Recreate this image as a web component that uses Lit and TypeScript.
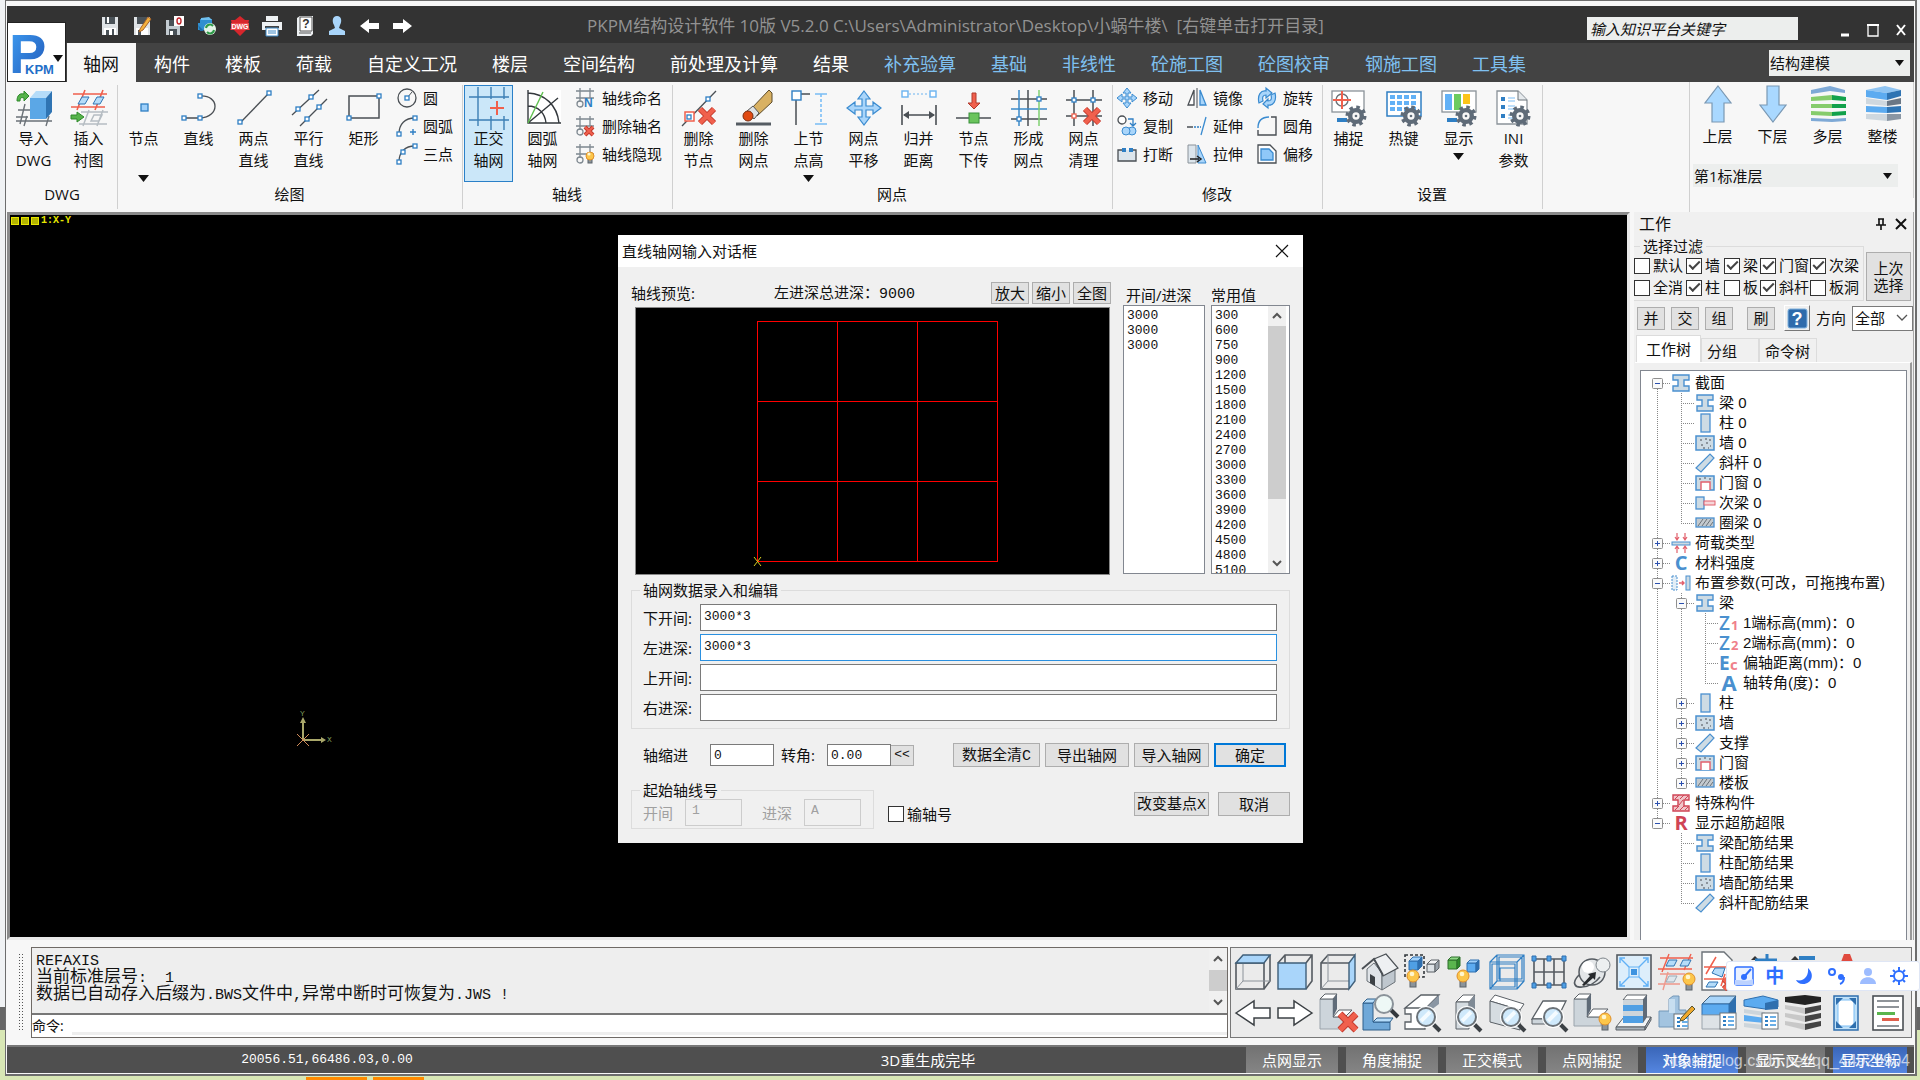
import { LitElement, html, svg, css, nothing } from "lit";
import type { SVGTemplateResult } from "lit";
import { customElement, state } from "lit/decorators.js";
import { classMap } from "lit/directives/class-map.js";

type Art = SVGTemplateResult;

const BLUE = "#2f7fc4";
const SKY = "#a9d5fa";
const INK = "#4a4f54";
const RED = "#f0604d";

/* ---------- reusable drawing parts ---------- */

const node = (x: number, y: number, c = BLUE) =>
  svg`<rect x=${x - 2} y=${y - 2} width="4" height="4" fill="#fff" stroke=${c} stroke-width="1.3"/>`;

const cross = (x: number, y: number, s: number, w = 5) =>
  svg`<path d=${`M${x - s} ${y - s}L${x + s} ${y + s}M${x + s} ${y - s}L${x - s} ${y + s}`} stroke="#c33a2e" stroke-width=${w + 1} fill="none"/>
      <path d=${`M${x - s} ${y - s}L${x + s} ${y + s}M${x + s} ${y - s}L${x - s} ${y + s}`} stroke=${RED} stroke-width=${w - 1} fill="none"/>`;

const bulb = (x: number, y: number, r = 6) =>
  svg`<rect x=${x - r / 2} y=${y + r - 2} width=${r} height=${r + 1} fill="#8b949b" stroke="#5b6268" stroke-width="1"/>
      <circle cx=${x} cy=${y} r=${r} fill="#fcc64a" stroke="#e0902a"/>
      <circle cx=${x - 1} cy=${y - 2} r=${r / 2.6} fill="#fff6cf"/>`;

const lens = (x: number, y: number, r = 9) =>
  svg`<path d=${`M${x + r - 3} ${y + r - 3}L${x + r + 5} ${y + r + 5}`} stroke="#3c4145" stroke-width="4"/>
      <circle cx=${x} cy=${y} r=${r} fill="#cfe9fb" stroke="#fff" stroke-width="4"/>
      <circle cx=${x} cy=${y} r=${r} fill="#cfe9fb" stroke="#6b7278" stroke-width="2"/>
      <path d=${`M${x - 5} ${y + 4}L${x + 4} ${y - 5}`} stroke="#f4fbff" stroke-width="4"/>`;

const gear = (x: number, y: number, r: number, c = "#5f6b78", hole = "#f8f8f8") =>
  svg`<circle cx=${x} cy=${y} r=${r} fill="none" stroke=${c} stroke-width="5" stroke-dasharray="3.2 3.08"/>
      <circle cx=${x} cy=${y} r=${r - 0} fill=${c}/>
      <circle cx=${x} cy=${y} r=${r / 2.2} fill=${hole}/>
      <circle cx=${x} cy=${y} r=${r / 6} fill=${c}/>`;

const cube = (x: number, y: number, s: number, d: number, front: string, top: string, side: string, st = "#5a6066") =>
  svg`<g stroke=${st} stroke-width="1" stroke-linejoin="round">
      <path d=${`M${x} ${y + d}h${s}v${s}h${-s}z`} fill=${front}/>
      <path d=${`M${x} ${y + d}l${d} ${-d}h${s}l${-d} ${d}z`} fill=${top}/>
      <path d=${`M${x + s} ${y + d}l${d} ${-d}v${s}l${-d} ${d}z`} fill=${side}/></g>`;

const list = (x: number, y: number, w = 16, h = 16) =>
  svg`<rect x=${x} y=${y} width=${w} height=${h} fill="#fff" stroke="#6b7278"/>
      ${[4, 8, 12].map((k) => svg`<rect x=${x + 3} y=${y + k - 1} width="3" height="2" fill="#2f7fc4"/><rect x=${x + 8} y=${y + k - 1} width="6" height="2" fill="#6aaee6"/>`)}`;

const beam = (c = "#4a90cf", f = "#cddbe4") =>
  svg`<path d="M2 2h16v5h-5v6h5v5H2v-5h5V7H2z" fill=${f} stroke=${c} stroke-width="1.4"/>`;

/* ---------- 36 x 36 artwork ---------- */

const big: Record<string, Art> = {
  importDwg: svg`<g stroke="#6b7278" fill="none" stroke-width="1.4"><path d="M2 20h12M0 27h12M4 34L9 14M0 31l36 0M8 36l3-10M30 36l3-10"/></g>
    <path d="M1 11c0-6 3-8 7-7V1l5 5-5 5V8C5 7 4 8 4 11z" fill="#56b34b" stroke="#2f8a2b"/>
    <path d="M14 8h16v21H14z" fill="#5ba7e6"/><path d="M14 8l6-7h16l-6 7z" fill="#b5dcf9"/><path d="M30 8l6-7v21l-6 7z" fill="#2f74b3"/>`,
  underlay: svg`<g stroke="#b6bdc3" stroke-width="1.5" fill="none"><path d="M10 22h27M8 34h28M12 36l6-16M26 36l6-16M20 31l3-6h8l-3 6z"/></g>
    <g stroke="${RED}" stroke-width="1.6" fill="none"><path d="M2 4h34M0 17h34M6 20L14 0M24 20L32 0"/></g>
    <path d="M7 14l4-7h7l-4 7zM22 14l4-7h7l-4 7z" fill="#b5dcf9" stroke="#2f74b3"/>
    <path d="M0 25h6v-3l7 5-7 5v-3H0z" fill="#56b34b" stroke="#2f8a2b"/>`,
  point: svg`<rect x="15" y="14" width="7" height="7" fill="#9fd0fa" stroke="#2f7fc4" stroke-width="1.3"/>`,
  polyline: svg`<path d="M3 28h16c20-1 20-23 0-22" fill="none" stroke="${INK}" stroke-width="1.3"/>${node(3, 28)}${node(19, 28)}${node(19, 6)}`,
  twoPoint: svg`<path d="M4 33L33 3" stroke="${INK}" stroke-width="1.3"/>${node(4, 32)}${node(33, 3)}`,
  parallel: svg`<path d="M1 25L28 0M9 36L36 9" stroke="${INK}" stroke-width="1.3"/>${node(7, 19)}${node(20, 7)}${node(16, 29)}${node(28, 17)}`,
  rect: svg`<rect x="3" y="6" width="30" height="22" fill="none" stroke="${INK}" stroke-width="1.5"/>${node(3, 28)}${node(33, 6)}`,
  ortho: svg`<g stroke="#3c7fb5" stroke-width="1.4"><path d="M7 -3v39M20 -3v12M33 -3v12M20 26v14M33 26v14M-2 7h40M-2 30h40"/></g><path d="M19 18h14M26 11v14" stroke="${RED}" stroke-width="2"/>`,
  arcGrid: svg`<rect x="2" y="0" width="34" height="35" fill="#fff"/><g stroke="#33383d" fill="none" stroke-width="1.4"><path d="M3 0v33h33M3 3c17 1 29 12 31 30M3 16c10 0 17 7 18 17M3 33L33 8"/></g><path d="M3 33L18 2" stroke="#5fc04f" stroke-width="1.4"/>`,
  delNode: svg`<path d="M1 36L35 1" stroke="${INK}" stroke-width="1.3"/>${node(27, 9)}<rect x="4" y="22" width="9" height="9" fill="#fff" stroke="${RED}" stroke-width="1.5"/>${node(8, 27)}${cross(26, 26, 7)}`,
  eraser: svg`<path d="M0 34h35" stroke="#555c63" stroke-width="3"/><path d="M15 19L33 0l3 3v9L21 26z" fill="#d9b163" stroke="#5b4a2a"/><path d="M11 21l6-5 6 7-5 6z" fill="#dfe3e6" stroke="#555"/><circle cx="12" cy="26" r="5" fill="#e04a12" stroke="#7a2d10"/>`,
  nodeHeight: svg`<path d="M5 7v28M9 4h10" stroke="${INK}" stroke-width="1.5"/><rect x="1" y="1" width="9" height="9" fill="#fff" stroke="#2f7fc4" stroke-width="1.4"/><path d="M24 4h12M24 34h12" stroke="#7abdf5" stroke-width="1.6"/><path d="M30 4v30" stroke="#7abdf5" stroke-width="1.6" stroke-dasharray="3 2"/>`,
  move: svg`<path d="M18 1l6 8h-4v7h7v-4l8 6-8 6v-4h-7v7h4l-6 8-6-8h4v-7H9v4l-8-6 8-6v4h7V9h-4z" fill="#a9d5fa" stroke="#3a8bd0" stroke-width="1.2"/>`,
  merge: svg`<g fill="#fff" stroke="#6ab3f0" stroke-width="1.4"><rect x="1" y="1" width="6" height="6"/><rect x="29" y="1" width="6" height="6"/></g><path d="M8 4h20" stroke="#6ab3f0" stroke-dasharray="2 2"/><path d="M1 15v20M35 15v20M3 25h30" stroke="${INK}" stroke-width="1.6"/><path d="M2 25l6-4v8zM34 25l-6-4v8z" fill="${INK}"/>`,
  nodeDown: svg`<path d="M0 28h35" stroke="${INK}" stroke-width="1.5"/><path d="M16 3h4v10h4l-6 6-6-6h4z" fill="${RED}" stroke="#b03a2e"/><rect x="13" y="23" width="10" height="10" fill="#6ac45c" stroke="#38903a"/>`,
  form: svg`<path d="M0 9h36M0 29h36M17 0v36" stroke="${INK}" stroke-width="1.5"/><path d="M8 0v36M0 19h36" stroke="#3c8bc9" stroke-width="1.5"/><path d="M28 0v36" stroke="#7fd070" stroke-width="1.5"/>${node(28, 9)}${node(8, 29)}`,
  clean: svg`<path d="M0 10h36M0 26h36M8 0v36M27 0v36" stroke="${INK}" stroke-width="1.5"/>${node(8, 10)}${node(27, 10)}${node(8, 26, RED)}${cross(26, 26, 7)}`,
  snap: svg`<rect x="1" y="1" width="32" height="21" fill="#fff" stroke="#8a9299" stroke-width="1.3"/><circle cx="11" cy="10" r="6" fill="none" stroke="#6b7278" stroke-width="1.4"/><path d="M2 10h18M11 1v18" stroke="${RED}" stroke-width="2"/><path d="M6 30h10" stroke="#2f7fc4" stroke-width="4"/>${gear(25, 26, 8)}`,
  hotkey: svg`<rect x="1" y="2" width="34" height="24" fill="#fff" stroke="#2f7fc4" stroke-width="1.5"/>${[5, 11, 17].map((y) => [4, 11, 18, 25].map((x) => svg`<rect x=${x} y=${y} width="5" height="4" fill="#62b1f6"/>`))}${gear(25, 26, 8)}`,
  display: svg`<rect x="1" y="1" width="34" height="21" fill="#fff" stroke="#8a9299" stroke-width="1.3"/><rect x="4" y="4" width="7" height="16" fill="#62b1f6"/><rect x="13" y="4" width="7" height="16" fill="#6ccb5f"/><rect x="22" y="4" width="7" height="10" fill="#fcc419"/><path d="M6 30h10" stroke="#2f7fc4" stroke-width="4"/>${gear(25, 26, 8)}`,
  ini: svg`<path d="M1 1h21l9 9v24H1z" fill="#fff" stroke="#8a9299" stroke-width="1.3"/><path d="M22 1v9h9" fill="#e6eaed" stroke="#6b7278"/>${[9, 17, 26].map((y) => svg`<rect x="5" y=${y - 2} width="4" height="4" fill="#2f7fc4"/><path d=${`M12 ${y - 1}h7M12 ${y + 2}h7`} stroke="#7abdf5"/>`)}${gear(24, 26, 8)}`,
  up: svg`<path d="M18 0l13 17h-7v19H12V17H5z" fill="#a9d8ff" stroke="#7a98b3" stroke-width="1.2"/>`,
  down: svg`<path d="M18 36l13-17h-7V0H12v19H5z" fill="#a9d8ff" stroke="#7a98b3" stroke-width="1.2"/>`,
  multi: svg`<path d="M1 4l19-4 15 4v3L20 5 1 8z" fill="#7ea9d6"/><path d="M1 11l21-2v5L1 15z" fill="#86cc6c"/><path d="M22 9l14 2v4l-14-1z" fill="#12a14b"/><path d="M1 18h21v4H1z" fill="#86cc6c"/><path d="M22 18h14v4H22z" fill="#12a14b"/><path d="M1 25l21 1v4L1 29z" fill="#86cc6c"/><path d="M22 26l14-1v4l-14 1z" fill="#12a14b"/><path d="M1 32l21 1 14-1v3l-14 1-21-1z" fill="#7ea9d6"/>`,
  whole: svg`<path d="M1 4l19-4 16 4-14 3z" fill="#8fc4f2"/><path d="M1 4l21 3v7L1 11z" fill="#5cabf0"/><path d="M22 7l14-3v6l-14 4z" fill="#2f74b3"/><path d="M1 12l21 3v5L1 18z" fill="#cfd8df"/><path d="M22 15l14-3v6l-14 2z" fill="#6b7785"/><path d="M1 20l21 1v6L1 26z" fill="#5cabf0"/><path d="M22 21l14-1v6l-14 1z" fill="#2f74b3"/><path d="M1 28h21v7L1 33z" fill="#cfd8df"/><path d="M22 28h14v5l-14 2z" fill="#8a96a3"/>`,

  viewTop: svg`<g stroke="#555b61" fill="none" stroke-width="1.6"><path d="M1 9h28v26H1zM29 35l6-8V1"/><path d="M1 35l7-8h27M8 9v18" stroke="#8b9299" stroke-width="1"/></g><path d="M1 9l7-8h27l-6 8z" fill="#a9d5fa" stroke="#3f5f7a" stroke-width="1.4"/>`,
  viewFront: svg`<g stroke="#555b61" fill="none" stroke-width="1.6"><path d="M1 9l7-8h27v26l-6 8M29 9l6-8M8 1v8"/></g><path d="M1 9h28v26H1z" fill="#a9d5fa" stroke="#3f5f7a" stroke-width="1.4"/>`,
  viewRight: svg`<g stroke="#555b61" fill="none" stroke-width="1.6"><path d="M29 9H1v26h28M1 9l7-8h27"/><path d="M1 35l7-8h21M8 1v26" stroke="#8b9299" stroke-width="1"/></g><path d="M29 9l6-8v26l-6 8z" fill="#a9d5fa" stroke="#3f5f7a" stroke-width="1.4"/>`,
  home: svg`<path d="M5 15v12l15 9V19L12 9z" fill="#dfe3e7" stroke="#6b7278"/><path d="M20 21v15l13-8V15z" fill="#bfc7ce" stroke="#6b7278"/><path d="M8 20l5 3v9l-5-3z" fill="#3c4145"/><path d="M12 5L24 0l12 14-15 8z" fill="#eef0f2" stroke="#4a4f54" stroke-width="1.2"/><path d="M0 15L12 5l9 16" fill="none" stroke="#4a4f54" stroke-width="1.8"/>`,
  lampSelect: svg`<rect x="1" y="1" width="19" height="22" fill="none" stroke="#33383d" stroke-width="1.6" stroke-dasharray="3 2"/>${cube(5, 3, 9, 4, "#4f9fe4", "#9fd0fa", "#2f6fae", "#2f6fae")}${cube(23, 6, 8, 4, "#dde2e6", "#f2f4f5", "#9aa3ab")}${bulb(9, 22)}`,
  lampGreen: svg`${cube(1, 3, 9, 3, "#5ab54e", "#8fd886", "#2d8a2b", "#2d6f2b")}${cube(20, 6, 9, 3, "#5cabf0", "#9fd0fa", "#2f6fae", "#2f6fae")}${bulb(16, 22)}`,
  wire: svg`<g stroke="#2f7fc4" fill="none" stroke-width="1.2"><path d="M1 8h27v27H1zM3 10h23v23H3zM8 1h27v26H8zM10 3h23v22H10zM1 8l7-7M28 8l7-7M28 35l7-8M1 35l7-8M11 14h15v13H11z"/></g>`,
  grid: svg`<path d="M3 5h30M3 18h30M3 31h30M3 5v26M13 5v26M23 5v26M33 5v26" stroke="#555b61" stroke-width="1.6"/><g fill="#4f9fe4" stroke="#2f6fae"><path d="M1 2h4v5H1zM16 2h4v5h-4zM31 2h4v5h-4zM1 29h4v5H1zM16 29h4v5h-4zM31 29h4v5h-4z"/></g>`,
  orbit: svg`<circle cx="18" cy="18" r="13" fill="#e3e6e8" stroke="#555b61" stroke-width="1.5"/><circle cx="14" cy="13" r="6" fill="#fff"/><circle cx="29" cy="11" r="7" fill="#eceff0" stroke="#7d848a"/><path d="M5 21c-8 8-4 13 3 12 7 0 14-5 18-10" fill="none" stroke="#555b61" stroke-width="1.6"/><path d="M8 31l8-9-2-2 8-2-1 8-2-2-9 8z" fill="#26292c"/>`,
  extents: svg`<rect x="1" y="1" width="34" height="34" fill="#ddeefb" stroke="#555b61" stroke-width="1.6"/><rect x="13" y="13" width="10" height="10" fill="none" stroke="#62b1f6"/><rect x="15" y="15" width="6" height="6" fill="#3d93e0"/><path d="M4 4l9 9M32 4l-9 9M4 32l9-9M32 32l-9-9M4 9V4h5M27 4h5v5M4 27v5h5M27 32h5v-5" stroke="#62b1f6" fill="none" stroke-width="1.4"/>`,
  layersLamp: svg`<g stroke="${RED}" stroke-width="1.4" fill="none"><path d="M2 4h33M0 15h34M4 18L11 0M26 16L33 0"/><path d="M2 20h25M0 30h22M5 36l5-18" opacity=".6"/></g><path d="M8 12l3-6h8l-3 6zM22 12l3-6h8l-3 6z" fill="#b5dcf9" stroke="#2f74b3"/><path d="M8 28l3-6h8l-3 6z" fill="#dde6ec" stroke="#9aa9b5"/>${bulb(31, 25)}`,
  sheet: svg`<path d="M1 -2h22l8 8v30H1z" fill="#fff" stroke="#6b7278" stroke-width="1.4"/><path d="M3 13h24M3 25h20M5 20L15 3M20 32l4-12" stroke="${RED}" stroke-width="1.5"/><path d="M11 19l3-5h10l-3 9zM5 33l3-5h9l-3 5z" fill="#b5dcf9" stroke="#2f74b3"/>${cross(28, 30, 5)}`,
  hiddenA: svg`<path d="M8 6l4-4 4 4z" fill="#333"/><path d="M12 6h22M24 0v10" stroke="#2f7fc4" stroke-width="3"/>`,
  hiddenB: svg`<path d="M6 6l4-4 4 4z" fill="#333"/><path d="M14 4h16" stroke="#2f7fc4" stroke-width="4"/>`,
  hiddenC: svg`<path d="M13 8l3-8h6l3 8z" fill="#e04a3e"/><path d="M10 32h16c-2 5-14 5-16 0z" fill="#c65a52"/>`,
  left: svg`<path d="M1 18L19 6v7h16v10H19v7z" fill="#fff" stroke="#3c4145" stroke-width="1.5"/>`,
  right: svg`<path d="M35 18L17 6v7H1v10h16v7z" fill="#fff" stroke="#3c4145" stroke-width="1.5"/>`,
  delPart: svg`<path d="M0 4h13v18h10v12H0z" fill="#cdd5db" stroke="#9aa3ab"/><path d="M0 4l5-5h12l-4 5z" fill="#fff" stroke="#5a6066"/><path d="M13 4l4-5v15l-4 8z" fill="#5f6b78"/><path d="M13 22l6-7h13l-7 7z" fill="#fff" stroke="#5a6066"/>${cross(28, 27, 8, 6)}`,
  zoomPart: svg`<path d="M1 8h10v19h17v8H1z" fill="#6fa8d8" stroke="#2f5f8a"/><path d="M1 8l4-4h9l-3 4zM11 27l4-4h16l-3 4z" fill="#b5dcf9" stroke="#2f5f8a"/><path d="M28 14l8 8" stroke="#33383d" stroke-width="4"/><circle cx="22" cy="9" r="9" fill="#eef8f6" stroke="#8a9299" stroke-width="2"/>`,
  lensBeam: svg`<path d="M1 13L17 0h18L22 13zM1 13v6h6v8H1v7h20V13" fill="#fff" stroke="#5a6066" stroke-width="1.3"/><path d="M22 13L35 0v9l-12 9z" fill="#8a96a3"/>${lens(22, 22)}`,
  lensCol: svg`<path d="M9 7l7-7h12l-6 7z" fill="#fff" stroke="#5a6066"/><path d="M9 7h13v27H9z" fill="#d5dce1" stroke="#5a6066"/><path d="M22 7l6-7v20l-6 8z" fill="#7f8a95"/>${lens(20, 22)}`,
  lensWall: svg`<path d="M1 6l5-6 29 9-4 6z" fill="#fff" stroke="#5a6066"/><path d="M1 6l30 9v20L1 27z" fill="#d5dce1" stroke="#5a6066"/>${lens(22, 22)}`,
  lensSlab: svg`<path d="M1 24L12 6h23L26 24z" fill="#fff" stroke="#5a6066" stroke-width="1.3"/><path d="M1 24h25v5H1z" fill="#cdd5db" stroke="#5a6066"/>${lens(22, 22)}`,
  partLamp: svg`<path d="M0 4h13v18h14v9H0z" fill="#cdd5db" stroke="#9aa3ab"/><path d="M0 4l5-5h12l-4 5z" fill="#fff" stroke="#5a6066"/><path d="M13 4l4-5v15l-4 8z" fill="#5f6b78"/><path d="M13 22l6-8h15l-7 8z" fill="#fff" stroke="#5a6066"/>${bulb(31, 24)}`,
  tower: svg`<path d="M0 32l8-10h27l-6 10z" fill="#f2f4f5" stroke="#5a6066"/><path d="M0 32h29v3H0zM29 32l6-10v3l-6 10z" fill="#a9b2ba" stroke="#5a6066"/><path d="M7 5l4-5h20l-4 5z" fill="#fff" stroke="#5a6066"/><path d="M7 5h20v5H7zM7 16h20v5H7z" fill="#cdd5db"/><path d="M7 10h20v6H7zM7 21h20v7H7z" fill="#4f9fe4"/><path d="M27 5l4-5v22l-4 6z" fill="#5f6b78"/>`,
  editPart: svg`<path d="M1 16h10V4l4-3h6v14h7v17H1z" fill="#a3c4e0" stroke="#7397b8"/><path d="M11 4h6v14h-6z" fill="#c7def0"/>${list(16, 19, 14, 15)}<path d="M23 23L34 11l3 3-11 11-4 1z" fill="#f0a92c" stroke="#553"/>`,
  boxList: svg`<path d="M1 9L9 1h26l-7 8z" fill="#a9d5fa" stroke="#3f5f7a"/><path d="M1 9h27v11H1z" fill="#5cabf0" stroke="#2f6fae"/><path d="M28 9l7-8v18l-7 6z" fill="#2f6fae"/><path d="M1 20h27v14H1z" fill="#dde2e6" stroke="#9aa3ab"/>${list(19, 18)}`,
  floorsList: svg`<path d="M1 5l19-4 15 4v7l-13 2L1 11z" fill="#5cabf0" stroke="#2f6fae"/><path d="M22 8l13-3v9l-13 1z" fill="#2f6fae"/><path d="M1 14l21 3v4L1 18z" fill="#cdd5db"/><path d="M1 20l21 3v5L1 26z" fill="#5cabf0"/><path d="M1 28l21 2v5L1 32z" fill="#cdd5db"/>${list(19, 18)}`,
  stack: svg`<path d="M0 2l20-2 16 2v5l-16 3L0 7z" fill="#222"/>${[14, 22, 30].map((y) => svg`<path d=${`M0 ${y - 4}l20 3v6L0 ${y}z`} fill="#c8c8c8"/><path d=${`M20 ${y - 1}l16-3v5l-16 4z`} fill="#444"/>`)}`,
  frame: svg`<rect x="6" y="1" width="24" height="34" fill="#bfe0f8" stroke="#2f6fae" stroke-width="1.5"/><rect x="10" y="5" width="16" height="26" fill="#fff" stroke="#7abdf5"/><path d="M8 3h7l-7 7zM28 3h-7l7 7zM8 33h7l-7-7zM28 33h-7l7-7z" fill="#2f6fae"/>`,
  report: svg`<rect x="3" y="1" width="30" height="34" fill="#fff" stroke="#4a4f54" stroke-width="1.6"/><g stroke="#6b7278" stroke-width="1.6"><path d="M7 6h22M7 12h22M7 31h22"/></g><rect x="7" y="17" width="18" height="3" fill="#5ab54e"/><rect x="12" y="23" width="17" height="3" fill="#e0604d"/>`,
};

/* ---------- 20 x 20 artwork ---------- */

const small: Record<string, Art> = {
  circle: svg`<circle cx="10" cy="10" r="9" fill="none" stroke="${INK}" stroke-width="1.3"/><path d="M10 10l5-6" stroke="${INK}"/>${node(10, 10)}`,
  arc: svg`<path d="M2 18C2 8 8 2 18 2" fill="none" stroke="${INK}" stroke-width="1.3"/>${node(2, 18)}${node(18, 2)}<path d="M13 16h6M16 13v6" stroke="${BLUE}" stroke-width="1.4"/>`,
  threePt: svg`<path d="M2 18C2 8 8 2 18 2" fill="none" stroke="${INK}" stroke-width="1.3"/>${node(2, 18)}${node(18, 2)}${node(6, 8)}`,
  axisName: svg`<g stroke="#7e8890" stroke-width="1.3" fill="none"><path d="M0 3h18M0 10h18M4 0v14M14 0v10"/><circle cx="4" cy="16" r="3"/></g><text x="8" y="19" font-family="Liberation Sans" font-weight="700" font-size="12" fill="#2f7fc4">N</text>`,
  axisDel: svg`<g stroke="#7e8890" stroke-width="1.3" fill="none"><path d="M0 3h18M0 10h18M4 0v14M14 0v10"/><circle cx="4" cy="16" r="3"/></g>${cross(13, 15, 4, 3)}`,
  axisShow: svg`<g stroke="#7e8890" stroke-width="1.3" fill="none"><path d="M0 3h18M0 10h18M4 0v14M14 0v10"/><circle cx="4" cy="16" r="3"/></g>${bulb(14, 12, 4)}`,
  move: svg`<path d="M10 0l4 5h-3v4h4V6l5 4-5 4v-3h-4v4h3l-4 5-4-5h3v-4H5v3l-5-4 5-4v3h4V5H6z" fill="#a9d5fa" stroke="#3a8bd0"/>`,
  copy: svg`<circle cx="5" cy="4" r="4" fill="#fff" stroke="#4a4f54" stroke-width="1.3"/><path d="M11 3h5v6M13 7l3 3 3-3" fill="none" stroke="${BLUE}" stroke-width="1.3"/><circle cx="15" cy="15" r="4" fill="${SKY}" stroke="#3a8bd0"/><circle cx="9" cy="15" r="4" fill="${SKY}" stroke="#3a8bd0"/>`,
  break: svg`<path d="M7 6H1v11h18V6h-6" fill="#dce5ec" stroke="${INK}" stroke-width="1.3"/><path d="M5 4h4v4H5zM12 4h4v4h-4z" fill="${BLUE}"/>`,
  mirror: svg`<path d="M7 2v15H1z" fill="#fff" stroke="${INK}" stroke-width="1.3"/><path d="M10 0v20" stroke="${INK}"/><path d="M13 2v15h6z" fill="${SKY}" stroke="#3a8bd0" stroke-width="1.3"/>`,
  extend: svg`<path d="M0 11h6" stroke="${INK}" stroke-width="1.5"/><path d="M7 11h7" stroke="${BLUE}" stroke-width="1.5" stroke-dasharray="2 1"/><path d="M14 19l5-18" stroke="#3a8bd0" stroke-width="1.3"/>`,
  stretch: svg`<path d="M1 1h8v18H1z" fill="#dce5ec" stroke="#8a9299"/><path d="M11 1l8 18h-8z" fill="${SKY}" stroke="#3a8bd0"/><path d="M3 15h9M10 12l4 3-4 3" fill="none" stroke="#222" stroke-width="1.5"/>`,
  rotate: svg`<path d="M2 15C0 7 4 2 9 3V0l6 5-6 5V7c-3 0-4 2-3 6z" fill="${SKY}" stroke="#3a8bd0" stroke-width="1.2"/><path d="M18 5c2 8-2 13-7 12v3l-5-4 5-5v2c3 0 4-2 3-6z" fill="${SKY}" stroke="#3a8bd0" stroke-width="1.2"/>`,
  fillet: svg`<path d="M1 12C1 5 5 1 12 1" fill="none" stroke="#3a8bd0" stroke-width="1.4"/><path d="M14 1h5v18H1v-5" fill="none" stroke="${INK}" stroke-width="1.4"/>`,
  offset: svg`<path d="M1 1h12l6 6v12H1z" fill="#fff" stroke="#4a4f54" stroke-width="1.3"/><path d="M4 5h8l4 4v7H4z" fill="#8fc8f8" stroke="#3a8bd0" stroke-width="1.3"/>`,

  save: svg`<path d="M2 1h16v18H2z" fill="#dfe3e6"/><path d="M5 1h10v7H5z" fill="#4a5258"/><path d="M7 1h2v6H7zM4 12h12v7H4z" fill="#fff"/><path d="M6 14h3v5H6zM12 13h2v6h-2z" fill="#4a5258"/>`,
  saveAs: svg`<path d="M2 1h16v18H2z" fill="#dfe3e6"/><path d="M5 1h10v7H5z" fill="#4a5258"/><path d="M4 12h12v7H4z" fill="#fff"/><path d="M6 14h3v5H6z" fill="#4a5258"/><path d="M8 13L16 1l3 2-8 11-4 2z" fill="#f4b13d" stroke="#a5622a"/>`,
  saveO: svg`<path d="M1 4h14v15H1z" fill="#c3cbd1"/><path d="M4 4h5v6H4zM4 13h8v6H4z" fill="#4a5258"/><path d="M5 15h3v4H5z" fill="#fff"/><rect x="9" y="0" width="10" height="10" fill="#fff"/><ellipse cx="14" cy="5" rx="2" ry="3" fill="none" stroke="#c0272d" stroke-width="1.4"/>`,
  sync: svg`<path d="M3 3h12v4H3zM1 7h14v7H1z" fill="#2f8fd0"/><path d="M4 2l8-1 3 3H4z" fill="#6fc0f0"/><path d="M1 9l6 6H3z" fill="#1f6ea8"/><circle cx="13" cy="13" r="6" fill="#e5f4e8"/><path d="M9 12a4 4 0 0 1 7-2M17 14a4 4 0 0 1-7 2" fill="none" stroke="#2d9a47" stroke-width="2"/>`,
  dwg: svg`<path d="M5 4l5-4 5 4h4l-1 5 2 5h-4l-6 6-6-6H0l2-5-1-5z" fill="#d7262c"/><path d="M1 7h18v7H1z" fill="#e8474b"/><text x="10" y="13" text-anchor="middle" font-family="Liberation Sans" font-size="7" font-weight="700" fill="#fff">DWG</text>`,
  print: svg`<path d="M4 0h12v5H4zM0 6h20v8H0z" fill="#eef1f3"/><path d="M3 10h14v2H3z" fill="#444"/><path d="M4 12h12v8H4z" fill="#fff" stroke="#3d88c4"/><path d="M6 15h8M6 17h8" stroke="#3d88c4"/>`,
  help: svg`<path d="M2 2l3-2h13v18l-2 2H2z" fill="#eef1f3"/><path d="M5 1h12v14H5z" fill="#fff" stroke="#555"/><text x="11" y="12" text-anchor="middle" font-family="Liberation Sans" font-size="12" font-weight="700" fill="#333">?</text><path d="M4 17h12" stroke="#555"/>`,
  user: svg`<path d="M10 0c5 0 5 6 3 9l-1 3 6 3v4H2v-4l6-3-1-3C5 6 5 0 10 0z" fill="#a9d5fa"/>`,
  undo: svg`<path d="M0 10l9-7v4h10v6H9v4z" fill="#fff"/>`,
  redo: svg`<path d="M20 10l-9-7v4H1v6h10v4z" fill="#fff"/>`,

  beam: beam(),
  column: svg`<rect x="6" y="1" width="9" height="18" fill="#cddbe4" stroke="#4a90cf" stroke-width="1.3"/>`,
  wall: svg`<rect x="1" y="3" width="18" height="14" fill="#cddbe4" stroke="#4a90cf" stroke-width="1.5"/><path d="M5 7h2M10 6h2M14 7h2M6 12h2M11 10h2M15 13h1M8 15h2M13 15h1" stroke="#4a4f54" stroke-width="1.2"/>`,
  brace: svg`<path d="M1 15L15 1l4 4L6 19z" fill="#cddbe4" stroke="#4a90cf" stroke-width="1.2"/>`,
  opening: svg`<rect x="1" y="3" width="18" height="14" fill="#cddbe4" stroke="#4a90cf" stroke-width="1.5"/><path d="M4 6h2M9 5h2M14 6h2" stroke="#4a4f54" stroke-width="1.2"/><path d="M6 17V9h9v8" fill="#fff" stroke="#e2606c" stroke-width="1.4"/>`,
  subBeam: svg`<rect x="1" y="4" width="8" height="12" fill="#cddbe4" stroke="#4a90cf" stroke-width="1.3"/><rect x="9" y="8" width="11" height="4" fill="#f6d5d8" stroke="#e2606c"/>`,
  ring: svg`<rect x="1" y="5" width="18" height="9" fill="#c4cacf" stroke="#4a90cf" stroke-width="1.3"/><path d="M3 13l5-7M7 13l5-7M11 13l5-7M15 13l3-4" stroke="#6b7278"/>`,
  load: svg`<rect x="1" y="9" width="18" height="3" fill="#cddbe4" stroke="#4a90cf"/><path d="M6 0v6M14 0v6M4 4l2 3 2-3M12 4l2 3 2-3M6 20v-6M14 20v-6M4 16l2-3 2 3M12 16l2-3 2 3" fill="none" stroke="#e2606c" stroke-width="1.2"/>`,
  strength: svg`<text x="10" y="17" text-anchor="middle" font-family="Open Sans" font-weight="700" font-size="20" fill="#4a90cf">C</text>`,
  params: svg`<rect x="1" y="3" width="5" height="14" fill="#e3eef7" stroke="#4a90cf" stroke-dasharray="2 1"/><path d="M8 10h5M11 8l2 2-2 2" stroke="#e2606c" fill="none" stroke-width="1.4"/><rect x="15" y="3" width="4" height="14" fill="#cddbe4" stroke="#4a90cf"/>`,
  z1: svg`<text x="0" y="17" font-family="Open Sans" font-weight="600" font-size="19" fill="#4a90cf">Z</text><text x="12" y="17" font-family="Open Sans" font-weight="700" font-size="13" fill="#ef7f8a">1</text>`,
  z2: svg`<text x="0" y="17" font-family="Open Sans" font-weight="600" font-size="19" fill="#4a90cf">Z</text><text x="12" y="17" font-family="Open Sans" font-weight="700" font-size="13" fill="#ef7f8a">2</text>`,
  ec: svg`<text x="0" y="17" font-family="Open Sans" font-weight="700" font-size="19" fill="#4a90cf">E</text><text x="11" y="17" font-family="Open Sans" font-weight="700" font-size="15" fill="#ef7f8a">c</text>`,
  a: svg`<text x="10" y="18" text-anchor="middle" font-family="Open Sans" font-weight="700" font-size="22" fill="#4a90cf">A</text>`,
  special: svg`${beam("#cf4455", "#f0c4c9")}<path d="M4 6l4-4M9 6l4-4M14 6l3-3M8 12l4-5M4 17l4-4M9 17l4-4M14 17l3-3" stroke="#cf4455"/>`,
  r: svg`<text x="10" y="17" text-anchor="middle" font-family="Open Sans" font-weight="700" font-size="20" fill="#cf4455">R</text>`,
};

const icon = (art: Art, box: number) =>
  html`<svg class="i${box}" viewBox="0 0 ${box} ${box}" aria-hidden="true">${art}</svg>`;

/* ---------- data ---------- */

const QUICK = ["save", "saveAs", "saveO", "sync", "dwg", "print", "help", "user", "undo", "redo"];

const TABS = ["轴网", "构件", "楼板", "荷载", "自定义工况", "楼层", "空间结构", "前处理及计算", "结果",
  "补充验算", "基础", "非线性", "砼施工图", "砼图校审", "钢施工图", "工具集"];

interface Tool { icon: string; lines: string[]; menu?: boolean }
interface Group { name: string; tools: Tool[]; minor?: [string, string][][]; }

const t = (icon: string, ...lines: string[]): Tool => ({ icon, lines });
const m = (icon: string, ...lines: string[]): Tool => ({ icon, lines, menu: true });

const GROUPS: Group[] = [
  { name: "DWG", tools: [t("importDwg", "导入", "DWG"), t("underlay", "插入", "衬图")] },
  {
    name: "绘图",
    tools: [m("point", "节点", ""), t("polyline", "直线"), t("twoPoint", "两点", "直线"), t("parallel", "平行", "直线"), t("rect", "矩形")],
    minor: [[["circle", "圆"], ["arc", "圆弧"], ["threePt", "三点"]]],
  },
  {
    name: "轴线",
    tools: [t("ortho", "正交", "轴网"), t("arcGrid", "圆弧", "轴网")],
    minor: [[["axisName", "轴线命名"], ["axisDel", "删除轴名"], ["axisShow", "轴线隐现"]]],
  },
  {
    name: "网点",
    tools: [t("delNode", "删除", "节点"), t("eraser", "删除", "网点"), m("nodeHeight", "上节", "点高"), t("move", "网点", "平移"),
      t("merge", "归并", "距离"), t("nodeDown", "节点", "下传"), t("form", "形成", "网点"), t("clean", "网点", "清理")],
  },
  {
    name: "修改",
    tools: [],
    minor: [
      [["move", "移动"], ["copy", "复制"], ["break", "打断"]],
      [["mirror", "镜像"], ["extend", "延伸"], ["stretch", "拉伸"]],
      [["rotate", "旋转"], ["fillet", "圆角"], ["offset", "偏移"]],
    ],
  },
  { name: "设置", tools: [t("snap", "捕捉"), t("hotkey", "热键"), m("display", "显示"), t("ini", "INI", "参数")] },
];

const FLOORS: [string, string][] = [["up", "上层"], ["down", "下层"], ["multi", "多层"], ["whole", "整楼"]];

const FILTERS: [string, boolean][] = [
  ["默认", false], ["墙", true], ["梁", true], ["门窗", true], ["次梁", true],
  ["全消", false], ["柱", true], ["板", false], ["斜杆", true], ["板洞", false],
];

/* Prefix cells: | line, T branch, L last branch, a/-/z first, middle and last open node, +/y middle and last closed node. */
const TREE: [string, string, string][] = [
  ["a", "beam", "截面"],
  ["|T", "beam", "梁 0"],
  ["|T", "column", "柱 0"],
  ["|T", "wall", "墙 0"],
  ["|T", "brace", "斜杆 0"],
  ["|T", "opening", "门窗 0"],
  ["|T", "subBeam", "次梁 0"],
  ["|L", "ring", "圈梁 0"],
  ["+", "load", "荷载类型"],
  ["+", "strength", "材料强度"],
  ["-", "params", "布置参数(可改，可拖拽布置)"],
  ["|-", "beam", "梁"],
  ["||T", "z1", "1端标高(mm)：0"],
  ["||T", "z2", "2端标高(mm)：0"],
  ["||T", "ec", "偏轴距离(mm)：0"],
  ["||L", "a", "轴转角(度)：0"],
  ["|+", "column", "柱"],
  ["|+", "wall", "墙"],
  ["|+", "brace", "支撑"],
  ["|+", "opening", "门窗"],
  ["|y", "ring", "楼板"],
  ["+", "special", "特殊构件"],
  ["z", "r", "显示超筋超限"],
  [" T", "beam", "梁配筋结果"],
  [" T", "column", "柱配筋结果"],
  [" T", "wall", "墙配筋结果"],
  [" L", "brace", "斜杆配筋结果"],
];

const COMMON = [300, 600, 750, 900, 1200, 1500, 1800, 2100, 2400, 2700, 3000, 3300, 3600, 3900, 4200, 4500, 4800, 5100];

const VIEWS = ["viewTop", "viewFront", "viewRight", "home", "lampSelect", "lampGreen", "wire", "grid", "orbit", "extents",
  "layersLamp", "sheet", "hiddenA", "hiddenB", "hiddenC", "",
  "left", "right", "delPart", "zoomPart", "lensBeam", "lensCol", "lensWall", "lensSlab", "partLamp", "tower",
  "editPart", "boxList", "floorsList", "stack", "frame", "report"];

const MODES: [string, string][] = [["点网显示", ""], ["角度捕捉", ""], ["正交模式", ""], ["点网捕捉", ""],
  ["对象捕捉", "on"], ["显示叉丝", "mid"], ["显示坐标", "on end"]];

const LOG = ["REFAXIS", "当前标准层号:  1", "数据已自动存入后缀为.BWS文件中,异常中断时可恢复为.JWS !"];

const mixed = (s: string) =>
  s.split(/([\x20-\x7e]+)/).map((p) => (/^[\x20-\x7e]+$/.test(p) ? html`<span class="mono">${p}</span>` : p));

@customElement("app-root")
export class AppRoot extends LitElement {
  @state() private tab = 0;
  @state() private tool = "ortho";

  static styles = css`
    :host {
      display: flex;
      flex-direction: column;
      position: relative;
      box-sizing: border-box;
      min-height: 100vh;
      padding: 0 3px 4px 5px;
      background: linear-gradient(#f0f2f4 0 1007px, #666 1007px 1030px, #d8e7b5 1030px);
      font-family: "Open Sans", "Noto Sans CJK SC", sans-serif;
      font-size: 15px;
      line-height: 20px;
      color: #111;
      overflow: hidden;
    }
    *, *::before, *::after { box-sizing: border-box; }
    button, input, select { font: inherit; color: inherit; margin: 0; padding: 0; border: 0; background: none; border-radius: 0; }
    button { cursor: pointer; white-space: nowrap; }
    svg { display: block; flex: none; overflow: visible; }
    .i36 { width: 36px; height: 36px; }
    .i20 { width: 20px; height: 20px; }
    .mono { font-family: "Liberation Mono", monospace; white-space: pre; }

    .window {
      flex: 1;
      display: flex;
      flex-direction: column;
      position: relative;
      background: #f7f7f7;
      border: 1px solid #6d6d6d;
      border-width: 1px 2px 2px 1px;
      padding: 5px 1px 1px;
    }

    .titlebar { display: flex; align-items: center; height: 37px; background: #333; padding: 2px 4px 0 93px; }
    .quick { display: flex; justify-content: space-between; width: 312px; }
    .title { flex: 1; margin: 0; padding-left: 175px; font-size: 17px; line-height: 26px; font-weight: 400; color: #929292; white-space: pre; }
    .search { width: 211px; height: 23px; background: #eceeed; padding: 0 3px; margin: 6px 38px 0 0; }
    .search::placeholder { color: #111; font-style: italic; opacity: 1; }
    .winbtns { display: flex; gap: 10px; padding-top: 8px; color: #fff; }
    .winbtns svg { width: 18px; height: 14px; }

    .tabs { display: flex; align-items: stretch; height: 39px; background: #434343; padding: 0 4px 0 60px; }
    .tabs nav { display: flex; gap: 1px; flex: 1; }
    .tab { padding: 2px 17px 0 16px; margin-right: 1px; font-size: 18px; color: #fff; margin-right: 0; }
    .tab + .tab { padding-left: 17px; }
    .tab.linked { color: #7fc0f0; }
    .tab.current { background: #f7f7f7; color: #111; }
    .picker { display: grid; align-items: center; background: #eceeed; }
    .picker select { grid-area: 1 / 1; appearance: none; width: 100%; height: 100%; padding-left: 1px; }
    .picker svg { grid-area: 1 / 1; justify-self: end; margin-right: 6px; pointer-events: none; }
    .mode { width: 141px; height: 26px; margin: 7px 0; }

    .logo { position: absolute; left: 1px; top: 21px; width: 59px; height: 60px; background: #fff; border: 1px solid #222; }
    .logo svg { width: 57px; height: 58px; }

    .ribbon { display: flex; height: 130px; }
    .group { display: flex; flex-direction: column; border-right: 1px solid #d0d0d0; margin: 3px -1px 3px 0; flex: none; }
    .tools { display: flex; height: 98px; }
    .caption { text-align: center; line-height: 22px; }
    .tool { display: flex; flex-direction: column; align-items: center; justify-content: flex-start; width: 55px; height: 97px; padding: 4px 2px 0 0; line-height: 22px; border: 1px solid transparent; }
    .tool.active { width: 49px; margin: 0 3px 0 2px; padding-right: 0; background: #cbe7f9; border-color: #2a80c8; }
    .tool .i36 { margin-bottom: 1px; }
    .caret { width: 11px; height: 7px; margin-top: 4px; }
    .minor { display: flex; flex-direction: column; width: 70px; margin-top: -1px; }
    .minor.wide { width: 101px; }
    .minor button { display: flex; align-items: center; height: 28px; padding-left: 5px; gap: 6px; text-align: left; }
    .spacer { flex: 1; border-right: 1px solid #d0d0d0; }
    .floors { width: 224px; border-right: 1px solid #d0d0d0; padding-top: 4px; margin-bottom: 14px; flex: none; }
    .floors .row { display: flex; }
    .floors .row button { width: 55px; display: flex; flex-direction: column; align-items: center; gap: 4px; }
    .floors .picker { width: 205px; height: 23px; margin: 18px 0 0 3px; }

    .main { flex: 1; display: flex; gap: 4px; }
    .canvas { position: relative; flex: 1; background: #000; border: 3px solid #8a8a8a; border-right-color: #e8e8e8; border-bottom-color: #e8e8e8; overflow: hidden; }
    .viewtag { display: flex; align-items: center; gap: 2px; font: 700 10px/12px "Liberation Mono", monospace; color: #e6e600; padding-left: 1px; }
    .viewtag i { width: 8px; height: 8px; background: #b4b400; border: 1px solid #e6e600; }
    .ucs { position: absolute; left: 286px; top: 497px; width: 40px; height: 40px; }

    .dialog { position: absolute; left: 608px; top: 20px; width: 685px; background: #f0f0f0; }
    .dlgbar { display: flex; justify-content: space-between; align-items: center; height: 32px; background: #fff; padding: 0 14px 0 4px; }
    .dlgbar h2 { margin: 0; font-size: 15px; font-weight: 400; }
    .body { padding: 15px 13px 14px; line-height: 16px; }
    .top { display: flex; gap: 6px; }
    .left { flex: 1; margin-right: 6px; }
    .head { display: flex; align-items: center; gap: 3px; height: 22px; margin-bottom: 3px; }
    .head span:first-child { width: 140px; }
    .head span:nth-child(2) { flex: 1; }
    .btn { background: #e1e1e1; border: 1px solid #adadad; height: 24px; line-height: 16px; }
    .head .btn { width: 38px; height: 22px; }
    .preview { display: block; width: 475px; height: 268px; margin-left: 4px; background: #000; border: 1px solid #888; }
    .col { display: flex; flex-direction: column; }
    .col label { height: 23px; padding: 5px 0 0 3px; }
    .c2 label { padding-left: 0; }
    .box { display: flex; height: 269px; background: #fff; border: 1px solid #828790; overflow: hidden; }
    .box ul { flex: 1; list-style: none; margin: 0; padding: 2px 0 0 3px; font: 13px/15px "Liberation Mono", monospace; }
    .c1 { width: 82px; }
    .c2 { width: 79px; }
    .scroll { display: flex; flex-direction: column; align-items: center; width: 18px; background: #f0f0f0; }
    .box .scroll { margin-right: 3px; }
    .scroll svg { width: 18px; height: 20px; }
    .scroll .thumb { width: 100%; background: #cdcdcd; }
    .box .thumb { height: 173px; }
    .scroll .rest { flex: 1; }

    fieldset { border: 1px solid #dcdcdc; margin: 0; padding: 0; min-width: 0; }
    legend { margin-left: 8px; padding: 0 3px; line-height: 16px; }
    .entry { margin-top: 7px; }
    .rows { display: flex; flex-direction: column; gap: 3px; padding: 6px 12px 7px 11px; }
    .rows label { display: flex; align-items: center; }
    .rows span { width: 57px; }
    .field { background: #fff; border: 1px solid #7a7a7a; font: 13px/16px "Liberation Mono", monospace; padding: 0 3px; min-width: 0; outline: none; }
    .rows .field { flex: 1; height: 27px; padding-bottom: 3px; }
    .rows .focus { border-color: #2a90e0; }
    .line { display: flex; align-items: center; margin-top: 14px; padding: 0 4px 0 12px; }
    .line label { display: flex; align-items: center; }
    .line .shrink span { width: 67px; }
    .line .shrink { margin-right: 7px; }
    .line .angle span { width: 46px; }
    .w64 { width: 64px; height: 22px; }
    .more { width: 23px; height: 21px; font: 13px/16px "Liberation Mono", monospace; border-left: 0; }
    .acts { display: flex; gap: 5px; margin-left: auto; }
    .b87 { width: 87px; }
    .b84 { width: 84px; }
    .b75 { width: 75px; }
    .b72 { width: 72px; }
    .primary { border: 2px solid #0078d7; }
    .foot { display: flex; margin-top: 15px; }
    .start .pair { display: flex; align-items: center; gap: 20px; padding: 1px 12px 2px 11px; color: #a0a0a0; }
    .start label { display: flex; align-items: center; }
    .start label span { width: 42px; }
    .start .field { width: 57px; height: 27px; background: #f0f0f0; border-color: #ccc; padding: 0 6px 4px; }
    .tick { appearance: none; display: grid; place-items: center; width: 16px; height: 16px; background: #fff; border: 1px solid #333; flex: none; }
    .tick:checked::before { content: ""; width: 11px; height: 6px; border: solid #444; border-width: 0 0 2px 2px; transform: translateY(-2px) rotate(-45deg); }
    .number { display: flex; align-items: center; gap: 3px; margin-left: 14px; padding-top: 16px; }
    .foot .acts { gap: 9px; padding-top: 10px; }

    .side { width: 280px; display: flex; flex-direction: column; background: #f0f0f0; border-right: 1px solid #aaa; flex: none; }
    .sidebar { display: flex; align-items: center; height: 23px; padding: 0 6px 0 5px; gap: 8px; }
    .sidebar h3 { flex: 1; margin: 0; font-size: 16px; font-weight: 400; }
    .filter { display: flex; align-items: flex-end; gap: 2px; padding-top: 2px; }
    .filter fieldset { width: 230px; border-left: 0; }
    .filter legend { margin-left: 6px; line-height: 18px; }
    .checks { display: grid; grid-template-columns: 52px 38px 36px 50px 54px; row-gap: 3px; padding: 1px 0 3px; }
    .checks label { display: flex; align-items: center; gap: 3px; height: 19px; white-space: nowrap; line-height: 19px; }
    .again { width: 45px; height: 49px; white-space: normal; line-height: 17px; padding: 0 6px; background: #e1e1e1; border: 1px solid #adadad; }
    .ops { display: flex; align-items: center; height: 26px; margin-top: 4px; padding: 0 0 0 3px; gap: 6px; }
    .ops .btn { width: 28px; height: 23px; }
    .ops .gap { margin-left: 8px; }
    .ops .q { width: 26px; height: 26px; margin-left: 3px; border: 1px solid; border-color: #fff #777 #777 #fff; }
    .ops .q svg { width: 24px; height: 24px; }
    .ops .picker { flex: 1; height: 25px; background: #fff; border: 1px solid #7a7a7a; }
    .ops .picker svg { margin-right: 4px; }
    .ops .picker select { padding-left: 2px; }
    .sidetabs { display: flex; align-items: flex-end; height: 27px; margin-top: 4px; padding-left: 2px; }
    .sidetabs button { height: 24px; border: 1px solid #dcdcdc; border-bottom: 0; padding: 0 5px; text-align: left; width: 58px; }
    .sidetabs .sel { height: 27px; width: 65px; background: #fff; padding: 0 9px; }
    .treebox { flex: 1; margin: 0 1px 0 1px; padding: 7px 3px 0 5px; border-top: 1px solid #fff; border-right: 2px solid #999; }
    .tree { list-style: none; margin: 0; height: 100%; padding: 2px 0 12px 4px; background: #fff; border: 1px solid #828790; border-bottom: 0; font-family: "Liberation Sans", "Noto Sans CJK SC", sans-serif; }
    .tree li { display: flex; height: 20px; white-space: nowrap; }
    .cell { width: 24px; height: 20px; }
    .tree .i20 { margin: 0 4px 0 2px; }

    .bottom { display: flex; padding: 7px 2px 7px 11px; }
    .grip { width: 7px; margin: 6px 6px 6px 0; background: radial-gradient(circle, #555 1px, transparent 1px) 0 0 / 3px 3px; }
    .console { flex: 1; display: flex; flex-direction: column; border: 1px solid #6f6a66; margin-right: 2px; }
    .logrow { display: flex; flex: 1; background: #eee; border-bottom: 2px solid #777; }
    .log { flex: 1; margin: 0; padding: 1px 4px; font-family: "Noto Sans CJK SC", sans-serif; font-size: 17px; line-height: 17px; white-space: pre; }
    .log .mono { font-size: 15px; }
    .log div { height: 17px; }
    .console .thumb { height: 21px; }
    .console .scroll svg { height: 22px; }
    .cmd { display: flex; align-items: center; height: 22px; background: #fff; font-size: 14px; }
    .cmd input { flex: 1; height: 18px; margin-left: 8px; border-bottom: 3px solid #eee; outline: none; }
    .views { display: grid; grid-template-columns: repeat(16, 1fr); width: 682px; height: 91px; padding: 4px 2px 4px 1px; background: #ebebeb; border: 1px solid #777; align-items: center; justify-items: center; }
    .views button { width: 36px; height: 36px; }

    .status { display: grid; grid-template-columns: 640fr 562fr auto; align-items: center; height: 28px; background: #4f4f4f; color: #fff; border-top: 2px solid #777; padding-right: 7px; text-align: center; }
    .status .coords { font-size: 13px; }
    .modes { display: flex; gap: 8px; margin-left: 37px; }
    .modes button { width: 92px; height: 26px; background: linear-gradient(#737373, #858585); color: #fff; }
    .modes .mid { width: 79px; }
    .modes .end { width: 74px; }
    .modes .on { background: linear-gradient(#3a66b8, #5586e0); }

    .task { position: absolute; bottom: 0; height: 3px; background: #ff8a00; }
    .task.one { left: 306px; width: 61px; }
    .task.two { left: 373px; width: 51px; }
    .mark { position: absolute; right: 10px; bottom: 9px; font: 16px/20px "Liberation Sans", sans-serif; color: #fff; opacity: 0.65; pointer-events: none; }
    .ime { position: absolute; right: 0; bottom: 89px; width: 194px; height: 30px; display: flex; align-items: center; justify-content: space-between; padding: 0 10px 0 7px; background: #fff; border: 1px solid #dfe6f5; border-radius: 3px; }
    .ime svg { width: 20px; height: 20px; }
    .ime .zh { font-size: 19px; font-weight: 700; color: #2f6fff; }
  `;

  private caret() {
    return html`<svg width="9" height="6" viewBox="0 0 9 6" aria-hidden="true"><path d="M0 0h9L4.5 6z" fill="#111"/></svg>`;
  }

  private header() {
    return html`
      <header>
        <div class="titlebar">
          <div class="quick">${QUICK.map((q) => html`<button aria-label=${q}>${icon(small[q], 20)}</button>`)}</div>
          <h1 class="title">PKPM结构设计软件 10版 V5.2.0 C:\\Users\\Administrator\\Desktop\\小蜗牛楼\\  [右键单击打开目录]</h1>
          <input class="search" aria-label="搜索" placeholder="输入知识平台关键字" />
          <div class="winbtns">
            <button aria-label="最小化"><svg viewBox="0 0 18 14"><path d="M5 12h8" stroke="#fff" stroke-width="3"/></svg></button>
            <button aria-label="最大化"><svg viewBox="0 0 18 14"><path d="M4 2h10v11H4z" fill="none" stroke="#fff" stroke-width="1.3"/><path d="M3 2h12" stroke="#fff" stroke-width="2"/></svg></button>
            <button aria-label="关闭"><svg viewBox="0 0 18 14"><path d="M5 2l8 10M13 2L5 12" stroke="#fff" stroke-width="2"/></svg></button>
          </div>
        </div>
        <div class="tabs">
          <nav>
            ${TABS.map((name, i) => html`<button
              class=${classMap({ tab: true, current: i === this.tab, linked: i > 8 })}
              @click=${() => (this.tab = i)}>${name}</button>`)}
          </nav>
          <div class="picker mode"><select aria-label="模块"><option>结构建模</option></select>${this.caret()}</div>
        </div>
        <button class="logo" aria-label="PKPM">
          <svg viewBox="0 0 57 58">
            <defs><linearGradient id="lg" x1="0" x2="1" y1="0" y2="1"><stop offset="0" stop-color="#3fa0f5"/><stop offset="1" stop-color="#1f55b5"/></linearGradient></defs>
            <text x="1" y="50" font-family="Liberation Sans" font-weight="700" font-size="56" fill="url(#lg)">P</text>
            <text x="17" y="51" font-family="Liberation Sans" font-weight="700" font-size="13" fill="#1f6fc8" stroke="#fff" stroke-width="3" paint-order="stroke">KPM</text>
            <path d="M45 32h10l-5 7z" fill="#111"/>
          </svg>
        </button>
      </header>`;
  }

  private ribbonTool(x: Tool) {
    return html`<button class=${classMap({ tool: true, active: this.tool === x.icon })} @click=${() => (this.tool = x.icon)}>
      ${icon(big[x.icon], 36)}
      ${x.lines.map((l) => (l ? html`<span>${l}</span>` : html`<span>&nbsp;</span>`))}
      ${x.menu ? html`<svg class="caret" viewBox="0 0 11 7"><path d="M0 0h11L5.5 7z" fill="#111"/></svg>` : nothing}
    </button>`;
  }

  private ribbon() {
    return html`
      <div class="ribbon">
        ${GROUPS.map((g) => html`
          <section class="group">
            <div class="tools">
              ${g.tools.map((x) => this.ribbonTool(x))}
              ${(g.minor ?? []).map((c) => html`<div class=${classMap({ minor: true, wide: c[0][1].length > 2 })}>
                ${c.map(([i, s]) => html`<button>${icon(small[i], 20)}<span>${s}</span></button>`)}</div>`)}
            </div>
            <div class="caption">${g.name}</div>
          </section>`)}
        <div class="spacer"></div>
        <section class="floors">
          <div class="row">${FLOORS.map(([i, s]) => html`<button>${icon(big[i], 36)}<span>${s}</span></button>`)}</div>
          <div class="picker"><select aria-label="标准层"><option>第1标准层</option></select>${this.caret()}</div>
        </section>
      </div>`;
  }

  private scrollbar() {
    return html`<div class="scroll" aria-hidden="true">
      <svg viewBox="0 0 18 20"><path d="M5 12l4-4 4 4" fill="none" stroke="#555" stroke-width="2"/></svg>
      <div class="thumb"></div><div class="rest"></div>
      <svg viewBox="0 0 18 20"><path d="M5 8l4 4 4-4" fill="none" stroke="#555" stroke-width="2"/></svg>
    </div>`;
  }

  private dialog() {
    const rows: [string, string][] = [["下开间:", "3000*3"], ["左进深:", "3000*3"], ["上开间:", ""], ["右进深:", ""]];
    const xs = [121, 201, 281, 361];
    const ys = [13, 93, 173, 253];
    return html`
      <section class="dialog" role="dialog" aria-labelledby="dlg">
        <div class="dlgbar">
          <h2 id="dlg">直线轴网输入对话框</h2>
          <button aria-label="关闭"><svg width="14" height="14" viewBox="0 0 14 14"><path d="M1 1l12 12M13 1L1 13" stroke="#111" stroke-width="1.2"/></svg></button>
        </div>
        <div class="body">
          <div class="top">
            <div class="left">
              <div class="head">
                <span>轴线预览:</span><span>左进深总进深：<span class="mono">9000</span></span>
                <button class="btn">放大</button><button class="btn">缩小</button><button class="btn">全图</button>
              </div>
              <svg class="preview" viewBox="0 0 473 266" role="img" aria-label="轴线预览">
                ${xs.map((x) => svg`<path d=${`M${x}.5 13V254`} stroke="#f00"/>`)}
                ${ys.map((y) => svg`<path d=${`M121 ${y}.5H362`} stroke="#f00"/>`)}
                <path d="M118 249l7 9M125 249l-7 9" stroke="#d8d020"/>
              </svg>
            </div>
            <div class="col c1"><label id="bay">开间/进深</label>
              <div class="box"><ul role="listbox" aria-labelledby="bay">${[3000, 3000, 3000].map((v) => html`<li role="option">${v}</li>`)}</ul></div>
            </div>
            <div class="col c2"><label id="com">常用值</label>
              <div class="box"><ul role="listbox" aria-labelledby="com">${COMMON.map((v) => html`<li role="option">${v}</li>`)}</ul>${this.scrollbar()}</div>
            </div>
          </div>
          <fieldset class="entry">
            <legend>轴网数据录入和编辑</legend>
            <div class="rows">
              ${rows.map(([l, v], i) => html`<label><span>${l}</span><input class=${classMap({ field: true, focus: i === 1 })} .value=${v} /></label>`)}
            </div>
          </fieldset>
          <div class="line">
            <label class="shrink"><span>轴缩进</span><input class="field w64" value="0" /></label>
            <label class="angle"><span>转角:</span><input class="field w64" value="0.00" /></label>
            <button class="btn more">&lt;&lt;</button>
            <div class="acts">
              <button class="btn b87">数据全清<span class="mono">C</span></button>
              <button class="btn b84">导出轴网</button>
              <button class="btn b75">导入轴网</button>
              <button class="btn b72 primary">确定</button>
            </div>
          </div>
          <div class="foot">
            <fieldset class="start" disabled>
              <legend>起始轴线号</legend>
              <div class="pair">
                <label><span>开间</span><input class="field" value="1" /></label>
                <label><span>进深</span><input class="field" value="A" /></label>
              </div>
            </fieldset>
            <label class="number"><input class="tick" type="checkbox" />输轴号</label>
            <div class="acts">
              <button class="btn b75">改变基点<span class="mono">X</span></button>
              <button class="btn b72">取消</button>
            </div>
          </div>
        </div>
      </section>`;
  }

  private cell(c: string) {
    const up = "|TL-z+y".includes(c);
    const down = "|Ta-+".includes(c);
    const box = "a-z+y".includes(c);
    return html`<svg class="cell" viewBox="0 0 24 20" aria-hidden="true">
      ${up ? svg`<path d="M12.5 0V10" stroke="#888" stroke-dasharray="1 1"/>` : nothing}
      ${down ? svg`<path d="M12.5 10V20" stroke="#888" stroke-dasharray="1 1"/>` : nothing}
      ${c !== "|" && c !== " " ? svg`<path d="M12 10.5H25" stroke="#888" stroke-dasharray="1 1"/>` : nothing}
      ${box ? svg`<rect x="7.5" y="5.5" width="10" height="10" rx="1" fill="#fafafa" stroke="#8f8f8f"/><path d=${"+y".includes(c) ? "M10 10.5h5M12.5 8v5" : "M10 10.5h5"} stroke="#2a4fae"/>` : nothing}
    </svg>`;
  }

  private side() {
    return html`
      <aside class="side">
        <div class="sidebar">
          <h3>工作</h3>
          <button aria-label="固定"><svg width="12" height="12" viewBox="0 0 12 12"><path d="M3 1h6M4 1v6M8 1v6M1 7h10M6 7v5" stroke="#111" stroke-width="1.6"/></svg></button>
          <button aria-label="关闭"><svg width="12" height="12" viewBox="0 0 12 12"><path d="M1 1l10 10M11 1L1 11" stroke="#111" stroke-width="2"/></svg></button>
        </div>
        <div class="filter">
          <fieldset>
            <legend>选择过滤</legend>
            <div class="checks">
              ${FILTERS.map(([n, on]) => html`<label><input class="tick" type="checkbox" .checked=${on} />${n}</label>`)}
            </div>
          </fieldset>
          <button class="again">上次选择</button>
        </div>
        <div class="ops">
          <button class="btn">并</button><button class="btn">交</button><button class="btn">组</button>
          <button class="btn gap">刷</button>
          <button class="q" aria-label="帮助"><svg viewBox="0 0 24 24"><rect x="3" y="3" width="19" height="19" rx="2" fill="#2f6bab" stroke="#7fb2df"/><text x="12" y="19" text-anchor="middle" font-family="Liberation Sans" font-weight="700" font-size="18" fill="#fff">?</text></svg></button>
          <label for="dir">方向</label>
          <div class="picker"><select id="dir"><option>全部</option></select>
            <svg width="12" height="8" viewBox="0 0 12 8"><path d="M1 1l5 5 5-5" fill="none" stroke="#555" stroke-width="1.3"/></svg></div>
        </div>
        <div class="sidetabs"><button class="sel">工作树</button><button>分组</button><button>命令树</button></div>
        <div class="treebox">
          <ul class="tree">
            ${TREE.map(([p, i, s]) => html`<li>${[...p].map((c) => this.cell(c))}${icon(small[i], 20)}<span>${s}</span></li>`)}
          </ul>
        </div>
      </aside>`;
  }

  render() {
    return html`
      <div class="window">
        ${this.header()}
        ${this.ribbon()}
        <main class="main">
          <div class="canvas">
            <div class="viewtag"><i></i><i></i><i></i><span>1:X-Y</span></div>
            <svg class="ucs" viewBox="0 0 40 40" aria-hidden="true">
              <path d="M7 10V28H26" fill="none" stroke="#a9a76a" stroke-width="2"/>
              <path d="M4 11l3-6 3 6zM25 25l5 3-5 3z" fill="#a9a76a"/>
              <path d="M1 22l12 12M13 22L1 34" stroke="#d08c5a"/>
              <text x="4" y="4" font-family="Liberation Mono" font-size="8" fill="#7f9a5a">Y</text>
              <text x="31" y="30" font-family="Liberation Mono" font-size="8" fill="#7f9a5a">X</text>
            </svg>
            ${this.dialog()}
          </div>
          ${this.side()}
        </main>
        <div class="bottom">
          <div class="grip"></div>
          <div class="console">
            <div class="logrow">
              <div class="log">${LOG.map((l) => html`<div>${mixed(l)}</div>`)}</div>
              ${this.scrollbar()}
            </div>
            <label class="cmd">命令:<input aria-label="命令" /></label>
          </div>
          <div class="views">
            ${VIEWS.map((v) => (v ? html`<button aria-label=${v}>${icon(big[v], 36)}</button>` : html`<span></span>`))}
          </div>
        </div>
        <footer class="status">
          <span class="coords mono">20056.51,66486.03,0.00</span>
          <span>3D重生成完毕</span>
          <div class="modes">${MODES.map(([n, c]) => html`<button class=${c}>${n}</button>`)}</div>
        </footer>
      </div>
      <span class="task one"></span><span class="task two"></span>
      <span class="mark">https://blog.csdn.net/qq_44926904</span>
      <div class="ime">
        <button aria-label="输入法"><svg viewBox="0 0 20 20"><rect x="1" y="1" width="18" height="18" rx="2" fill="#eaf1ff" stroke="#2f6fff" stroke-width="1.5"/><path d="M1 14c8 0 12 2 18-1v6H1z" fill="#bcd2ff"/><path d="M10 11l7-8" stroke="#2f6fff" stroke-width="2"/><circle cx="10" cy="11" r="3" fill="#2f6fff"/></svg></button>
        <button class="zh">中</button>
        <button aria-label="夜间"><svg viewBox="0 0 20 20"><path d="M13 2c7 6 4 16-5 16-4 0-6-2-7-4 8 2 13-4 12-12z" fill="#2f6fff"/></svg></button>
        <button aria-label="标点"><svg viewBox="0 0 20 20"><circle cx="5" cy="6" r="3" fill="none" stroke="#2f6fff" stroke-width="2"/><circle cx="14" cy="11" r="3" fill="#2f6fff"/><path d="M17 11c0 4-1 6-4 7" fill="none" stroke="#2f6fff" stroke-width="2"/></svg></button>
        <button aria-label="用户"><svg viewBox="0 0 20 20"><circle cx="10" cy="6" r="4" fill="#9dbcff"/><path d="M2 18c0-9 16-9 16 0z" fill="#9dbcff"/></svg></button>
        <button aria-label="设置"><svg viewBox="0 0 20 20"><circle cx="10" cy="10" r="5" fill="none" stroke="#2f6fff" stroke-width="2"/><path d="M10 1v4M10 15v4M1 10h4M15 10h4M4 4l2 2M14 14l2 2M16 4l-2 2M6 14l-2 2" stroke="#2f6fff" stroke-width="2"/></svg></button>
      </div>`;
  }
}
